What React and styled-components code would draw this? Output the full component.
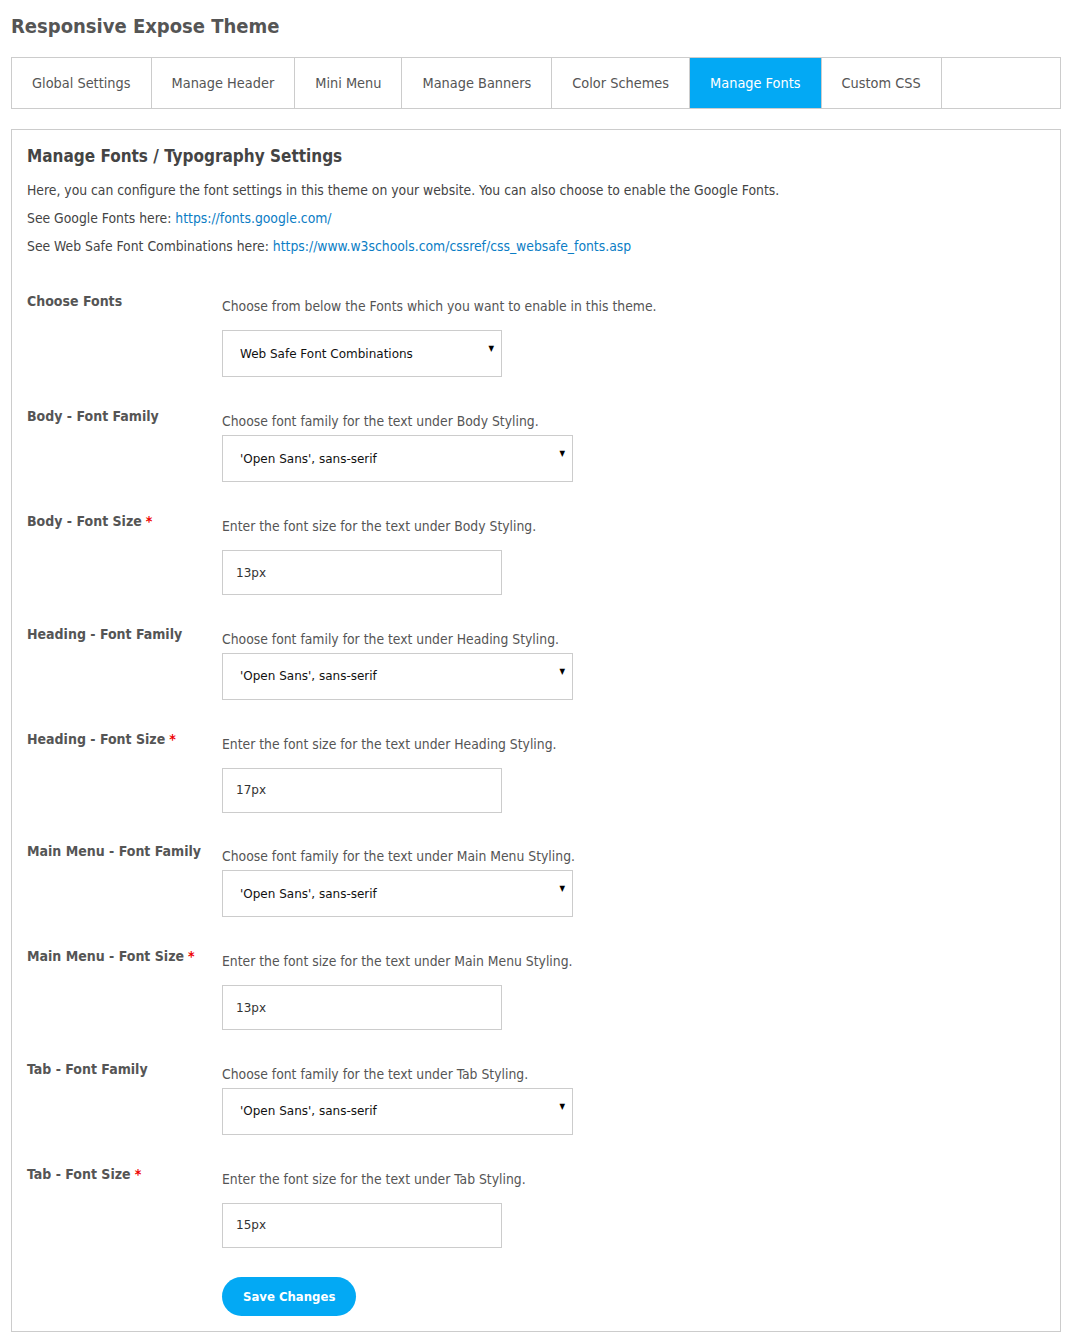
import React from "react";
import styled, { createGlobalStyle } from "styled-components";

const GlobalStyle = createGlobalStyle`
  body {
    margin: 0;
    background: #fff;
    font-family: "DejaVu Sans Condensed", "DejaVu Sans", sans-serif;
    color: #555;
  }
`;

// Page wrapper
const Page = styled.div`
  padding: 0 12px 10px 11px;
`;

const Title = styled.h1`
  margin: 0;
  padding-top: 13px;
  font-size: 20px;
  line-height: 26px;
  font-weight: bold;
  color: #555;
`;

// Tab bar
const Tabs = styled.nav`
  display: flex;
  margin-top: 18px;
  border: 1px solid #ccc;
  height: 50px;
`;

const Tab = styled.a`
  display: flex;
  align-items: center;
  padding: 0 20px;
  border-right: 1px solid #ccc;
  font-size: 14.4px;
  color: ${props => (props.active ? "#fff" : "#555")};
  background: ${props => (props.active ? "#03a9f4" : "transparent")};
  text-decoration: none;
  cursor: pointer;
`;

// Settings panel
const Panel = styled.section`
  margin-top: 20px;
  border: 1px solid #ccc;
  padding: 14px 15px 15px;
`;

const PanelHeading = styled.h2`
  margin: 0;
  font-size: 17px;
  line-height: 24px;
  font-weight: bold;
  color: #444;
`;

const Intro = styled.p`
  margin: 8px 0 0;
  font-size: 13.8px;
  line-height: 20px;
  color: #444;
  &:first-of-type {
    margin-top: 12px;
  }
`;

const Link = styled.a`
  color: #0b7dc5;
  text-decoration: none;
`;

const Form = styled.form`
  margin-top: 35px;
`;

// One label / control row; text inputs sit a little tighter than selects
const Row = styled.div`
  display: grid;
  grid-template-columns: 195px 1fr;
  margin-bottom: ${props => (props.compact ? "28.5px" : "29px")};
`;

const Label = styled.label`
  font-size: 14px;
  line-height: 20px;
  font-weight: bold;
  color: #555;
`;

const Required = styled.span`
  color: #e00;
  margin-left: 4px;
`;

const Field = styled.div`
  display: flex;
  flex-direction: column;
  align-items: flex-start;
`;

const Description = styled.p`
  margin: 5px 0 ${props => (props.tight ? "4px" : "14px")};
  font-size: 13.8px;
  line-height: 20px;
  color: #555;
`;

const SelectWrap = styled.div`
  position: relative;
  width: ${props => props.width}px;
  &::after {
    content: "▼";
    position: absolute;
    right: 8px;
    top: 14px;
    font-size: 8px;
    color: #000;
    pointer-events: none;
  }
`;

const Select = styled.select`
  appearance: none;
  -webkit-appearance: none;
  width: 100%;
  height: 47px;
  box-sizing: border-box;
  border: 1px solid #ccc;
  border-radius: 0;
  background: #fff;
  padding: 0 0 0 17px;
  font-family: "DejaVu Sans", Verdana, sans-serif;
  font-size: 12px;
  color: #111;
  outline: none;
`;

const Input = styled.input`
  width: 280px;
  height: 45px;
  box-sizing: border-box;
  border: 1px solid #ccc;
  padding: 0 0 0 13px;
  font-family: "DejaVu Sans", Verdana, sans-serif;
  font-size: 12px;
  color: #333;
  outline: none;
`;

const SaveButton = styled.button`
  margin: 1px 0 0 195px;
  height: 39px;
  padding: 0 21px;
  border: none;
  border-radius: 20px;
  background: #03a9f4;
  color: #fff;
  font-family: inherit;
  font-size: 13px;
  font-weight: bold;
  cursor: pointer;
`;

const tabs = [
  "Global Settings",
  "Manage Header",
  "Mini Menu",
  "Manage Banners",
  "Color Schemes",
  "Manage Fonts",
  "Custom CSS"
];

const fontOption = "'Open Sans', sans-serif";

const fields = [
  { label: "Choose Fonts", desc: "Choose from below the Fonts which you want to enable in this theme.", type: "select", value: "Web Safe Font Combinations", width: 280 },
  { label: "Body - Font Family", desc: "Choose font family for the text under Body Styling.", type: "select", value: fontOption, width: 351, tight: true },
  { label: "Body - Font Size", desc: "Enter the font size for the text under Body Styling.", type: "input", value: "13px", required: true },
  { label: "Heading - Font Family", desc: "Choose font family for the text under Heading Styling.", type: "select", value: fontOption, width: 351, tight: true },
  { label: "Heading - Font Size", desc: "Enter the font size for the text under Heading Styling.", type: "input", value: "17px", required: true },
  { label: "Main Menu - Font Family", desc: "Choose font family for the text under Main Menu Styling.", type: "select", value: fontOption, width: 351, tight: true },
  { label: "Main Menu - Font Size", desc: "Enter the font size for the text under Main Menu Styling.", type: "input", value: "13px", required: true },
  { label: "Tab - Font Family", desc: "Choose font family for the text under Tab Styling.", type: "select", value: fontOption, width: 351, tight: true },
  { label: "Tab - Font Size", desc: "Enter the font size for the text under Tab Styling.", type: "input", value: "15px", required: true }
];

function FieldRow({ field }) {
  return (
    <Row compact={field.type === "input"}>
      <Label>
        {field.label}
        {field.required && <Required>*</Required>}
      </Label>
      <Field>
        <Description tight={field.tight}>{field.desc}</Description>
        {field.type === "select" ? (
          <SelectWrap width={field.width}>
            <Select defaultValue={field.value}>
              <option>{field.value}</option>
            </Select>
          </SelectWrap>
        ) : (
          <Input type="text" defaultValue={field.value} />
        )}
      </Field>
    </Row>
  );
}

export default function App() {
  return (
    <Page>
      <GlobalStyle />
      <Title>Responsive Expose Theme</Title>
      <Tabs>
        {tabs.map(t => (
          <Tab key={t} active={t === "Manage Fonts"}>
            {t}
          </Tab>
        ))}
      </Tabs>
      <Panel>
        <PanelHeading>Manage Fonts / Typography Settings</PanelHeading>
        <Intro>
          Here, you can configure the font settings in this theme on your website. You can also choose to enable the Google Fonts.
        </Intro>
        <Intro>
          See Google Fonts here: <Link href="#">https://fonts.google.com/</Link>
        </Intro>
        <Intro>
          See Web Safe Font Combinations here:{" "}
          <Link href="#">https://www.w3schools.com/cssref/css_websafe_fonts.asp</Link>
        </Intro>
        <Form onSubmit={e => e.preventDefault()}>
          {fields.map(f => (
            <FieldRow key={f.label} field={f} />
          ))}
          <SaveButton type="submit">Save Changes</SaveButton>
        </Form>
      </Panel>
    </Page>
  );
}
